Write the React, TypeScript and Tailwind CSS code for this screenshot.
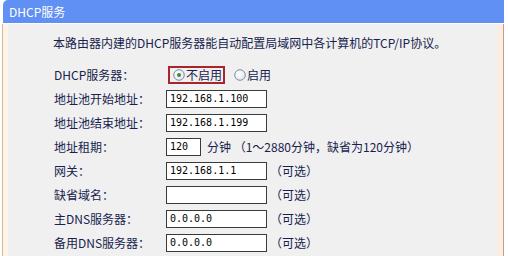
import React from 'react';

const Radio: React.FC<{ checked?: boolean }> = ({ checked }) => (
  <svg width="12" height="12" viewBox="0 0 12 12" className="shrink-0">
    <defs>
      <radialGradient id={checked ? 'rg1' : 'rg0'} cx="0.4" cy="0.4" r="0.7">
        <stop offset="0" stopColor="#ffffff" />
        <stop offset="1" stopColor="#dfe3ea" />
      </radialGradient>
    </defs>
    <circle cx="6" cy="6" r="5.3" fill={`url(#${checked ? 'rg1' : 'rg0'})`} stroke="#7a8ea8" strokeWidth="1" />
    {checked && <circle cx="6" cy="6" r="2" fill="#3f8a3a" />}
  </svg>
);

const TextBox: React.FC<{ value?: string; w?: string }> = ({ value = '', w = 'w-[101px]' }) => (
  <div
    className={`${w} h-[18px] bg-white border border-[#3a3a3a] pl-[3px] flex items-center text-[10px] text-black`}
    style={{ fontFamily: '"DejaVu Sans Mono", "Liberation Mono", monospace' }}
  >
    {value}
  </div>
);

const Optional = () => <span className="ml-[3px]">（可选）</span>;

const Row: React.FC<{ label: string; children: React.ReactNode }> = ({ label, children }) => (
  <div className="h-[24px] flex items-center">
    <div className="w-[112px] shrink-0">{label}</div>
    <div className="flex items-center">{children}</div>
  </div>
);

export default function App() {
  return (
    <div
      className="w-[508px] h-[256px] bg-white overflow-hidden text-[12px] leading-[16px] text-[#17234d]"
      style={{ fontFamily: '"Noto Sans CJK SC", "Noto Sans", sans-serif' }}
    >
      <div className="ml-[2px] w-[502px] h-full flex flex-col">
        <div className="ml-[1px] h-[23px] rounded-tl-[5px] bg-[#6090f4] text-white pl-[6px] flex items-center">
          DHCP服务
        </div>
        <div className="flex-1 border-t border-white">
          <div className="h-full border-l border-r border-l-[#d9b88f] border-r-[#c59f85]">
            <div className="h-full border-l-[5px] border-r-[6px] border-l-[#fcf4e7] border-r-[#fcede4] bg-[#f0f0f0] pl-[46px] pt-[11px]">
              <div className="-ml-[1px]">本路由器内建的DHCP服务器能自动配置局域网中各计算机的TCP/IP协议。</div>
              <div className="mt-[12px]">
                <Row label="DHCP服务器：">
                  <div className="ml-[2px] h-[18px] border-2 border-[#a8262b] flex items-center pl-[3px] pr-[1px] gap-[1px]">
                    <Radio checked />
                    <span>不启用</span>
                  </div>
                  <div className="ml-[9px] flex items-center gap-[1px]">
                    <Radio />
                    <span>启用</span>
                  </div>
                </Row>
                <Row label="地址池开始地址：">
                  <TextBox value="192.168.1.100" />
                </Row>
                <Row label="地址池结束地址：">
                  <TextBox value="192.168.1.199" />
                </Row>
                <Row label="地址租期：">
                  <TextBox value="120" w="w-[35px]" />
                  <span className="ml-[6px] whitespace-pre">分钟 （1～2880分钟，缺省为120分钟）</span>
                </Row>
                <Row label="网关：">
                  <TextBox value="192.168.1.1" />
                  <Optional />
                </Row>
                <Row label="缺省域名：">
                  <TextBox />
                  <Optional />
                </Row>
                <Row label="主DNS服务器：">
                  <TextBox value="0.0.0.0" />
                  <Optional />
                </Row>
                <Row label="备用DNS服务器：">
                  <TextBox value="0.0.0.0" />
                  <Optional />
                </Row>
              </div>
            </div>
          </div>
        </div>
      </div>
    </div>
  );
}
